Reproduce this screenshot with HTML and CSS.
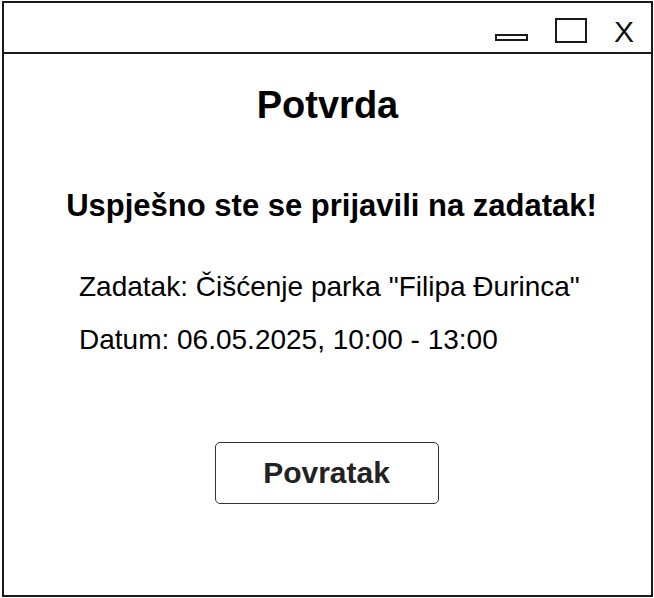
FILE: index.html
```html
<!DOCTYPE html>
<html lang="hr">
<head>
<meta charset="utf-8">
<title>Potvrda</title>
<link rel="stylesheet" href="styles.css">
</head>
<body>
<div class="window">
  <div class="titlebar">
    <span class="btn-min"></span>
    <span class="btn-max"></span>
    <span class="btn-close">X</span>
  </div>
  <div class="content">
    <h1 class="title">Potvrda</h1>
    <h2 class="success">Uspješno ste se prijavili na zadatak!</h2>
    <div class="details">
      <p class="line">Zadatak: Čišćenje parka "Filipa Đurinca"</p>
      <p class="line">Datum: 06.05.2025, 10:00 - 13:00</p>
    </div>
    <button class="back">Povratak</button>
  </div>
</div>
</body>
</html>
```

FILE: styles.css
```css
html, body {
  margin: 0;
  padding: 0;
  background: #fff;
}
body {
  font-family: "Liberation Sans", Arial, sans-serif;
  color: #000;
}
.window {
  box-sizing: border-box;
  width: 651px;
  height: 596px;
  margin: 1px 0 0 2px;
  border: 2px solid #1a1a1a;
  display: flex;
  flex-direction: column;
}
.titlebar {
  height: 49px;
  border-bottom: 2px solid #1a1a1a;
  display: flex;
  justify-content: flex-end;
  align-items: flex-start;
  padding-right: 17px;
}
.btn-min {
  box-sizing: border-box;
  width: 33px;
  height: 7px;
  border: 2px solid #1a1a1a;
  margin-top: 31px;
}
.btn-max {
  box-sizing: border-box;
  width: 32px;
  height: 25px;
  border: 2px solid #1a1a1a;
  margin-top: 15px;
  margin-left: 27px;
}
.btn-close {
  font-size: 30px;
  line-height: 30px;
  margin-top: 14px;
  margin-left: 27px;
  color: #111;
}
.content {
  flex: 1;
  display: flex;
  flex-direction: column;
  align-items: center;
  padding-top: 29px;
}
.title {
  margin: 0;
  font-size: 38px;
  line-height: 44px;
  font-weight: bold;
}
.success {
  margin: 61px 0 0;
  font-size: 31px;
  line-height: 36px;
  font-weight: bold;
  padding-left: 8px;
}
.details {
  align-self: stretch;
  margin-top: 47px;
  padding-left: 75px;
  display: flex;
  flex-direction: column;
  gap: 21px;
}
.line {
  margin: 0;
  font-size: 28px;
  line-height: 32px;
}
.back {
  margin-top: 86px;
  width: 224px;
  height: 62px;
  box-sizing: border-box;
  background: #fff;
  border: 1.5px solid #333;
  border-radius: 5px;
  font-family: "Liberation Sans", Arial, sans-serif;
  font-size: 30px;
  font-weight: bold;
  color: #222;
  padding: 0;
  margin-left: -2px;
}
```
